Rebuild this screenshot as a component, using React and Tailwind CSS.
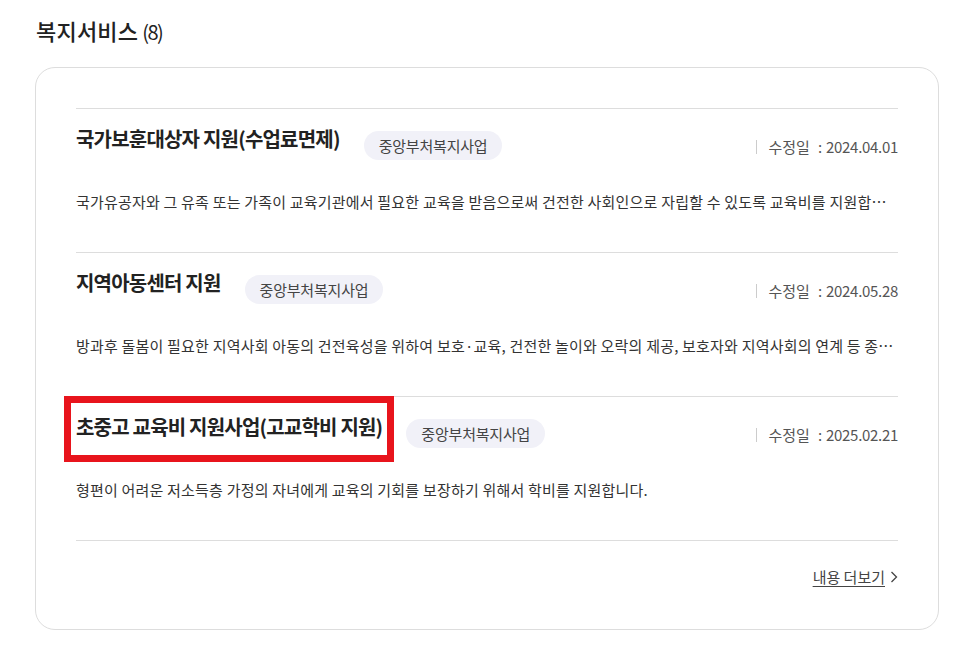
import React from "react";

const items = [
  {
    title: "국가보훈대상자 지원(수업료면제)",
    tag: "중앙부처복지사업",
    date: "2024.04.01",
    desc: "국가유공자와 그 유족 또는 가족이 교육기관에서 필요한 교육을 받음으로써 건전한 사회인으로 자립할 수 있도록 교육비를 지원합니다. 보훈대상자 본인 및 자녀의 수업료를 면제합니다.",
  },
  {
    title: "지역아동센터 지원",
    tag: "중앙부처복지사업",
    date: "2024.05.28",
    desc: "방과후 돌봄이 필요한 지역사회 아동의 건전육성을 위하여 보호·교육, 건전한 놀이와 오락의 제공, 보호자와 지역사회의 연계 등 종합적인 아동복지서비스를 제공합니다.",
  },
  {
    title: "초중고 교육비 지원사업(고교학비 지원)",
    tag: "중앙부처복지사업",
    date: "2025.02.21",
    desc: "형편이 어려운 저소득층 가정의 자녀에게 교육의 기회를 보장하기 위해서 학비를 지원합니다.",
    marked: true,
  },
];

function ServiceItem({ item }) {
  return (
    <li className="border-t border-[#dddddd] pt-[16px] pb-[39px]">
      <div className="flex items-start">
        <span className="relative text-[20px] leading-[28px] font-bold text-[#222222] tracking-[-0.8px]">
          {item.title}
          {item.marked && (
            <span className="absolute -left-[12px] -right-[12px] -top-[17px] -bottom-[21px] border-[7px] border-[#e8141c]" />
          )}
        </span>
        <span className="ml-[24px] mt-[6px] h-[29px] px-[15px] rounded-full bg-[#f1f1f8] text-[15px] leading-[29px] text-[#444444] tracking-[-0.2px]">
          {item.tag}
        </span>
        <span className="ml-auto mt-[12px] flex items-center text-[15px] leading-[20px] text-[#555555]">
          <span className="w-px h-[14px] bg-[#cccccc] mr-[11px]" />
          수정일
          <span className="ml-[8px] mr-[4px]">:</span>
          <span className="tracking-[-0.3px]">{item.date}</span>
        </span>
      </div>
      <p className="mt-[31px] text-[15px] leading-[22px] text-[#333333] truncate tracking-[0.2px]">
        {item.desc}
      </p>
    </li>
  );
}

export default function App() {
  return (
    <div
      className="bg-white w-[965px] h-[657px] overflow-hidden"
      style={{ fontFamily: '"Noto Sans CJK KR", "Noto Sans", sans-serif' }}
    >
      <h2 className="pl-[36px] pt-[16px] text-[22px] leading-[28px] font-medium text-[#222222] flex items-baseline">
        <span className="tracking-[0.2px]">복지서비스</span>
        <span className="ml-[4px] text-[20px] leading-[26px] font-normal tracking-[-1.5px]">(8)</span>
      </h2>
      <div className="mt-[22px] ml-[35px] w-[904px] h-[563px] border border-[#dddddd] rounded-[20px] pt-[40px] px-[40px]">
        <ul>
          {items.map((item, index) => (
            <ServiceItem item={item} key={index} />
          ))}
        </ul>
        <div className="border-t border-[#dddddd] pt-[26px] flex justify-end">
          <a className="flex items-center text-[15px] leading-[20px] text-[#444444]">
            <span className="underline underline-offset-[3px]">내용 더보기</span>
            <svg className="ml-[5px] w-[8px] h-[12px]" viewBox="0 0 8 12" fill="none">
              <path d="M1.5 1 L6.5 6 L1.5 11" stroke="#444444" strokeWidth="1.3" />
            </svg>
          </a>
        </div>
      </div>
    </div>
  );
}
